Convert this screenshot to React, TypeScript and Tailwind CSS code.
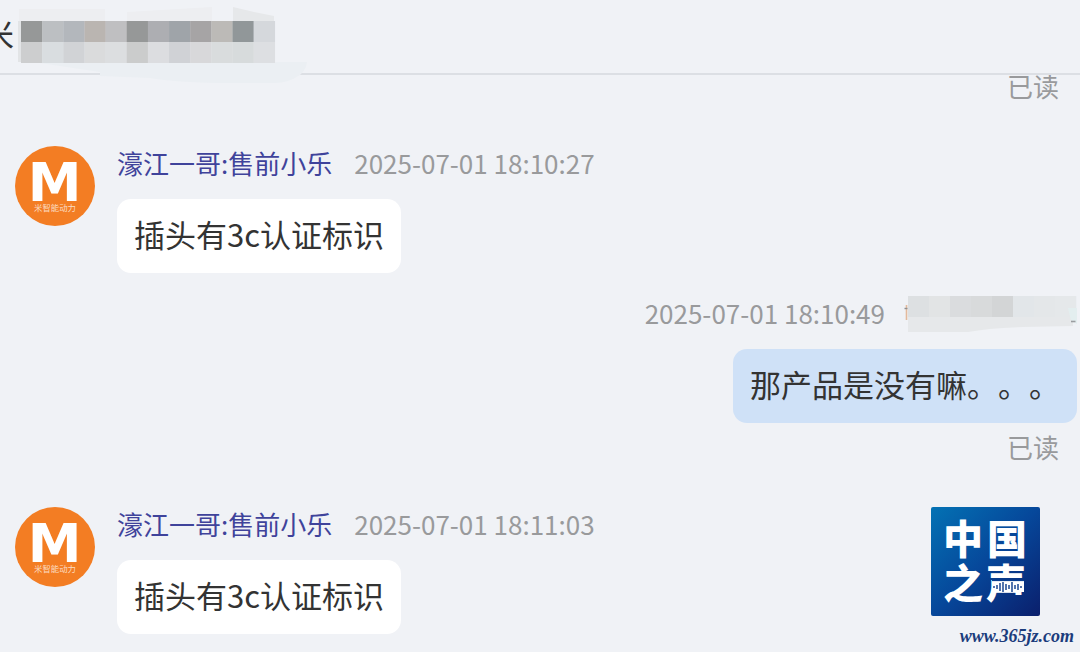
type Message = {
  id: number;
  side: 'left' | 'right';
  time: string;
  text: string;
};

const SENDER = '濠江一哥:售前小乐';

const MESSAGES: Message[] = [
  { id: 1, side: 'left', time: '2025-07-01 18:10:27', text: '插头有3c认证标识' },
  { id: 2, side: 'right', time: '2025-07-01 18:10:49', text: '那产品是没有嘛。。。' },
  { id: 3, side: 'left', time: '2025-07-01 18:11:03', text: '插头有3c认证标识' },
];

// Mosaic cells, left to right. Each cell is 21px wide.
const TITLE_TOP = ['#969898', '#bcbfc2', '#b3b7bc', '#bab5b1', '#bfbfc1', '#969898', '#adaeb2', '#9fa4a9', '#a6a4a5', '#bcbab7', '#919799', '#d5d8dc'];
const TITLE_BOTTOM = ['#cdcecf', '#d9dde0', '#d1d3d6', '#dadbdc', '#dcdee0', '#cbcccc', '#dcdde0', '#d0d2d6', '#d8d8da', '#d9dcdd', '#d7dbdc', '#dddfe2'];
const NAME_CELLS = ['#dde0e2', '#e2e4e5', '#dadcde', '#d8dadb', '#d3d5d6', '#e2e6e9', '#e4e7e9', '#e5e8ea'];

function TitleMosaic() {
  return (
    <svg className="pointer-events-none absolute top-0 left-0 z-10" width="320" height="90" viewBox="0 0 320 90" aria-hidden="true">
      <path d="M33 62 H307 Q306 70 300 75 Q288 83 275 83 H230 Q180 83 150 78 L100 76 V72 Z" fill="#ebeff3" />
      <path d="M19 9 H105 V21 H127 V12 L212 7 V21 H19 Z" fill="#edeef1" />
      <path d="M233 7 L254 12 L274 16 V21 H233 Z" fill="#e6e8ea" />
      <rect x="18" y="21" width="4" height="41" fill="#e2e4e6" />
      {TITLE_TOP.map((fill, i) => (
        <rect key={i} x={21 + i * 21.15} y="21" width="21.4" height="21" fill={fill} />
      ))}
      {TITLE_BOTTOM.map((fill, i) => (
        <rect key={i} x={21 + i * 21.15} y="42" width="21.4" height="21" fill={fill} />
      ))}
    </svg>
  );
}

function NameMosaic() {
  return (
    <svg className="h-[40px] w-[174px] shrink-0 overflow-visible" viewBox="0 0 174 40" aria-hidden="true">
      <path d="M3.5 9 V24" stroke="#e3b99c" strokeWidth="1.6" />
      <path d="M1.5 12.5 H4.5" stroke="#8f8f92" strokeWidth="1.4" />
      <path d="M5 21 H170 V30 L120 31 Q85 32 65 36 H5 Z" fill="#e6e8ea" />
      {NAME_CELLS.map((fill, i) => (
        <rect key={i} x={5 + i * 21} y="0" width="21.3" height="21" fill={fill} />
      ))}
      <path d="M165 12 H174 V28 L168 24 Z" fill="#e3eeef" />
      <path d="M168 25.5 H172.5" stroke="#9a9da0" strokeWidth="1.6" />
    </svg>
  );
}

function Avatar() {
  return (
    <svg className="size-[80px] shrink-0" viewBox="0 0 80 80" role="img" aria-label="米智能动力">
      <circle cx="40" cy="40" r="40" fill="#f37d23" />
      <text x="39.5" y="54.5" textAnchor="middle" fontSize="54" fill="#fff" className="font-['DejaVu_Sans',sans-serif] font-bold">
        M
      </text>
      <text x="40" y="65" textAnchor="middle" fontSize="8.4" fill="#fcdcc2">
        米智能动力
      </text>
    </svg>
  );
}

function StationLogo() {
  return (
    <svg className="size-[109px]" viewBox="0 0 109 109" role="img" aria-label="中国之声">
      <defs>
        <linearGradient id="station-bg" x1="0" y1="0" x2="1" y2="1">
          <stop offset="0" stopColor="#0372b4" />
          <stop offset="0.5" stopColor="#06479a" />
          <stop offset="1" stopColor="#0b1f6c" />
        </linearGradient>
      </defs>
      <rect width="109" height="109" rx="2" fill="url(#station-bg)" />
      <g fill="#fff" fontSize="40" className="font-black">
        <text x="12" y="47">中</text>
        <text x="56" y="47">国</text>
        <text x="12" y="91">之</text>
        <text x="55" y="91">声</text>
      </g>
      {/* sound wave across the last character */}
      <path d="M61 74 H93 V85 H61 Z" fill="#fff" />
      <path d="M61 73.5 H93" stroke="#083f92" strokeWidth="1.2" />
      <path
        d="M63 79 V81 M66 78 V82 M69 76 V84 M72 75 V85 M75 77 V83 M78 78 V82 M81 75 V85 M84 78 V82 M87 77 V83 M90 79 V81"
        stroke="#093a8a"
        strokeWidth="1.4"
      />
    </svg>
  );
}

function ReadMark() {
  return <p className="pr-[21px] text-right text-[26px] leading-[22px] text-[#999a9c]">已读</p>;
}

function Bubble({ side, text }: Pick<Message, 'side' | 'text'>) {
  return (
    <p
      className={`rounded-[14px] px-[17px] pt-[12px] pb-[16px] text-[31px] leading-[46px] text-[#333] [text-spacing-trim:space-all] ${
        side === 'left' ? 'bg-white' : 'bg-[#cfe1f7]'
      }`}
    >
      {text}
    </p>
  );
}

function LeftMessage({ side, time, text }: Message) {
  return (
    <article className="flex items-start gap-[22px] pl-[15px]">
      <Avatar />
      <div className="flex flex-col items-start gap-[19px]">
        <header className="flex gap-[22px] text-[26px] leading-[34px]">
          <span className="text-[#3f439b]">{SENDER}</span>
          <time className="text-[#999a9c]">{time}</time>
        </header>
        <Bubble side={side} text={text} />
      </div>
    </article>
  );
}

function RightMessage({ side, time, text }: Message) {
  return (
    <article className="flex flex-col items-end gap-[19px] pr-[3px]">
      <header className="flex h-[34px] gap-[18px] text-[26px] leading-[34px] text-[#999a9c]">
        <time>{time}</time>
        <NameMosaic />
      </header>
      <Bubble side={side} text={text} />
    </article>
  );
}

export default function App() {
  const [first, reply, second] = MESSAGES;

  return (
    <div
      lang="zh-CN"
      className="relative flex h-screen flex-col overflow-hidden bg-[#f0f2f6] font-['Noto_Sans_CJK_SC',sans-serif]"
    >
      <header className="shrink-0 overflow-hidden border-b-2 border-[#dcdfe4] pt-[10px] pb-[17px]">
        <h1 className="-ml-[18px] text-[32px] leading-[46px] text-[#333]">米</h1>
      </header>
      <TitleMosaic />

      <main className="flex flex-1 flex-col gap-[49px] overflow-hidden">
        <ReadMark />
        <div className="flex flex-col gap-[23px]">
          <LeftMessage {...first} />
          <div className="flex flex-col gap-[13px]">
            <RightMessage {...reply} />
            <ReadMark />
          </div>
        </div>
        <LeftMessage {...second} />
      </main>

      <div className="absolute right-[6px] bottom-[6px] flex flex-col items-end gap-[10px]">
        <div className="pr-[34px]">
          <StationLogo />
        </div>
        <span className="font-['Liberation_Serif',serif] text-[18px] leading-[20px] font-bold text-[#1b3c7c] italic">
          www.365jz.com
        </span>
      </div>
    </div>
  );
}
